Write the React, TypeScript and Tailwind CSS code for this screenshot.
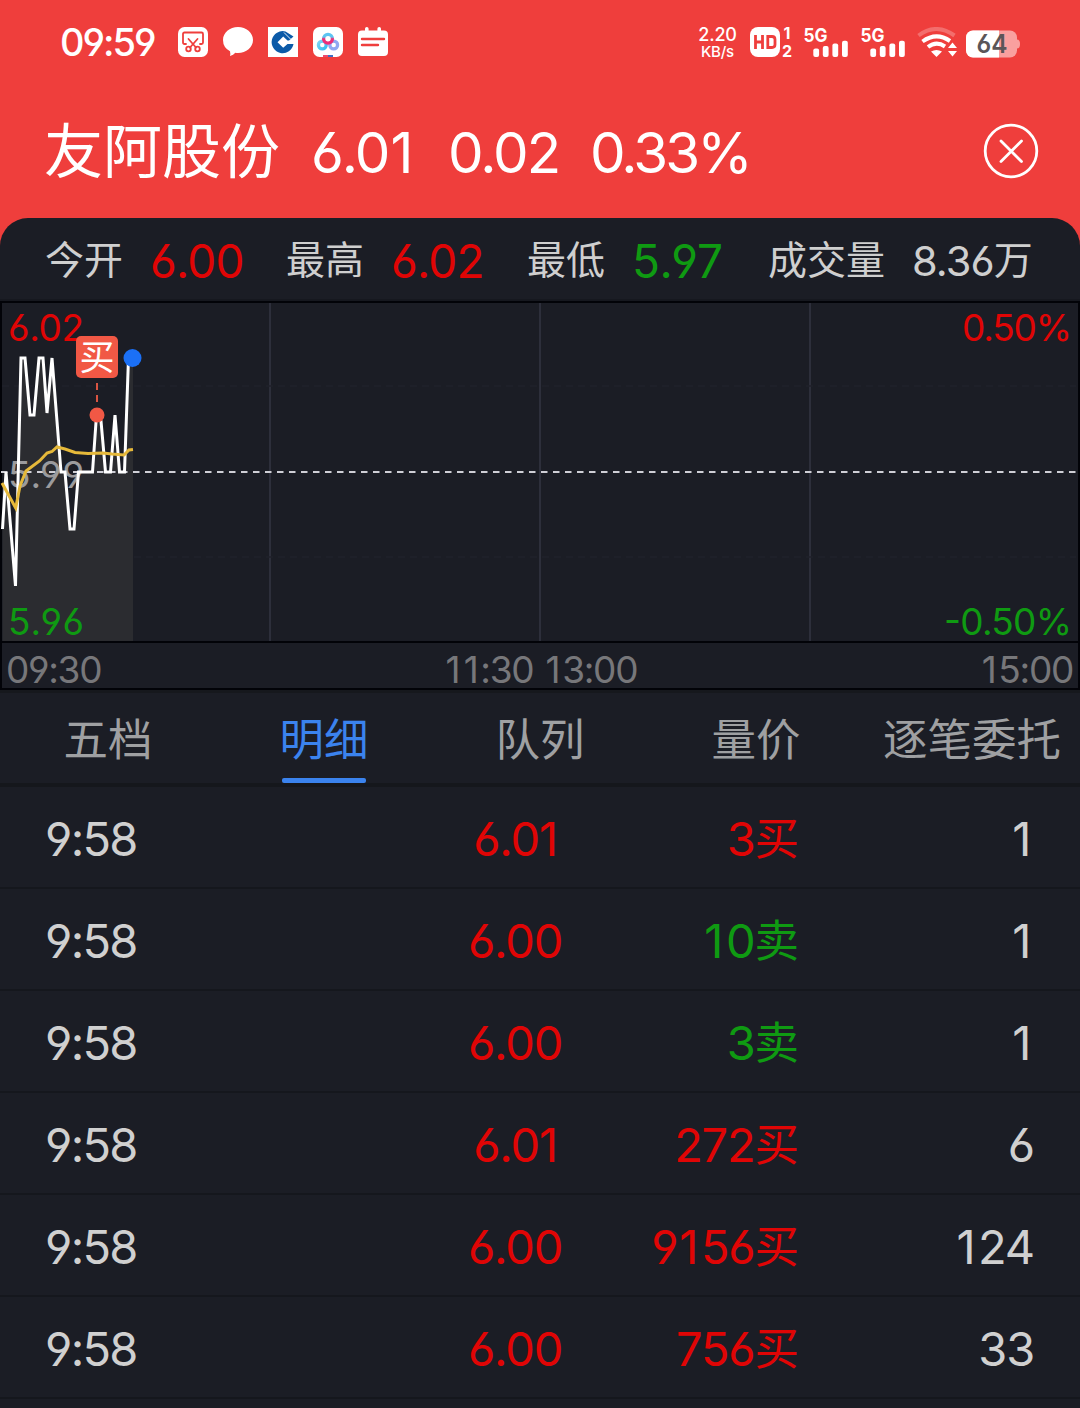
import React from "react"

type Side = "buy" | "sell"

type Tick = { time: string; price: string; volume: string; side: Side; count: string }

const ticks: Tick[] = [
  { time: "9:58", price: "6.01", volume: "3", side: "buy", count: "1" },
  { time: "9:58", price: "6.00", volume: "10", side: "sell", count: "1" },
  { time: "9:58", price: "6.00", volume: "3", side: "sell", count: "1" },
  { time: "9:58", price: "6.01", volume: "272", side: "buy", count: "6" },
  { time: "9:58", price: "6.00", volume: "9156", side: "buy", count: "124" },
  { time: "9:58", price: "6.00", volume: "756", side: "buy", count: "33" },
]

const tabs = ["五档", "明细", "队列", "量价", "逐笔委托"]

const pricePoints =
  "2.5,228 6,171 15.5,285 21,57 25,57 30,114 34,114 39,57 43,57 47,112 52,57 61,171 65,171 70,228 74,228 78.5,171 92.5,171 96.5,114 101,120 105.5,171 110.5,171 115,114 119.5,171 124.5,171 128.5,57 133,57"

const avgPoints =
  "2,182 15.7,207 20,185 26,170 39.5,160 47,152 52,150.5 57,146 65,148 75,151.5 88,152.5 103,152 112,153 124,154 129,149 133,148.5"

// the "1" is narrow in Inter, give it some air on both sides
function Num({ value }: { value: string }) {
  return (
    <span className="whitespace-nowrap">
      {value.split(/(1)/).map((part, i) =>
        part === "1" ? <span key={i} className="ml-[0.04em] mr-[0.08em]">1</span> : part
      )}
    </span>
  )
}

function SignalBars() {
  return (
    <div className="h-[30px] w-[46px]">
      <svg className="overflow-visible" width="46" height="30" viewBox="0 0 46 30" fill="#fff">
        <text x="-0.500" y="14.500" fontSize="19" fontWeight="700" textLength="24" lengthAdjust="spacingAndGlyphs">5G</text>
        <rect x="9.3" y="21.5" width="5.8" height="8.5" rx="2" />
        <rect x="18.8" y="19" width="5.8" height="11" rx="2" />
        <rect x="28.4" y="16.5" width="5.8" height="13.5" rx="2" />
        <rect x="38" y="13.7" width="5.8" height="16.3" rx="2" />
      </svg>
    </div>
  )
}

function StatusBar() {
  return (
    <div className="flex h-[84px] items-center pl-[60px] pr-[60px] text-white">
      <span className="w-[118px] text-[38px] font-medium leading-none tracking-[-2px]">09:59</span>
      <div className="flex gap-[15px]">
        <svg width="30" height="30" viewBox="0 0 30 30">
          <rect width="30" height="30" rx="6.5" fill="#fff" />
          <g fill="none" stroke="#ef3e3c" strokeWidth="1.8" strokeLinecap="round">
            <path d="M8 17H6.500Q5 17 5 15.500V7Q5 5.500 6.500 5.500H23.500Q25 5.500 25 7V15.500Q25 17 23.500 17H22" />
            <path d="M10.500 12L18 20.500M19.500 12L12 20.500" />
            <circle cx="10.500" cy="22" r="2.300" />
            <circle cx="19.500" cy="22" r="2.300" />
          </g>
        </svg>
        <svg width="30" height="30" viewBox="0 0 30 30" fill="#fff">
          <path d="M15 0C23.300 0 30 5.800 30 13S23.300 26 15 26Q13.500 26 12.300 25.800Q10.500 28 7 29Q7.600 26.500 7 24.300Q0 20.500 0 13C0 5.800 6.700 0 15 0Z" />
        </svg>
        <svg width="30" height="30" viewBox="0 0 30 30">
          <rect width="30" height="30" fill="#fff" />
          <path d="M17.500 4.500A11 11 0 1 0 25.500 17H19.500L15.200 20.800L9.500 15.200L15.200 9.500L19.500 13.500H21L25.500 9.500Z" fill="#0b5aa8" />
          <path d="M16 5.500L22.500 12" stroke="#fff" strokeWidth="0.900" />
        </svg>
        <svg width="30" height="30" viewBox="0 0 30 30">
          <defs>
            <linearGradient id="loopLeft" x1="0" y1="0" x2="1" y2="1">
              <stop offset="0" stopColor="#7fd3f5" />
              <stop offset="1" stopColor="#35bdf0" />
            </linearGradient>
            <linearGradient id="loopTop" x1="0" y1="0" x2="0" y2="1">
              <stop offset="0.300" stopColor="#5cc4f2" />
              <stop offset="0.500" stopColor="#ee2f78" />
            </linearGradient>
          </defs>
          <rect width="30" height="30" rx="6.5" fill="#fff" />
          <g fill="none" strokeWidth="3.300">
            <circle cx="9.300" cy="18" r="3.900" stroke="url(#loopLeft)" />
            <circle cx="20.700" cy="18" r="3.900" stroke="#8fa8f2" />
            <circle cx="15" cy="11.800" r="4.400" stroke="url(#loopTop)" />
          </g>
          <path d="M10 28H15V30H10Z" fill="#ee4b6a" />
          <path d="M15 28H20V30H15Z" fill="#3f6fc4" />
        </svg>
        <svg width="30" height="30" viewBox="0 0 30 30">
          <path d="M4 3.500H7V1.800A1.800 1.800 0 0 1 10.600 1.800V3.500H19.400V1.800A1.800 1.800 0 0 1 23 1.800V3.500H26Q30 3.500 30 7.500V25Q30 29 26 29H4Q0 29 0 25V7.500Q0 3.500 4 3.500Z" fill="#fff" />
          <path d="M4 12H26M4 18H20" stroke="#ef3e3c" strokeWidth="2.400" strokeLinecap="round" />
        </svg>
      </div>
      <div className="ml-auto flex items-center">
        <div className="mr-[13px] flex w-[39px] flex-col items-center font-medium">
          <span className="text-[18px] leading-[18px] tracking-[-0.2px]">2.20</span>
          <span className="text-[15px] leading-[15px] tracking-[-0.2px]">KB/s</span>
        </div>
        <svg className="mr-[10px] overflow-visible" width="44" height="30" viewBox="0 0 44 30">
          <rect width="30" height="30" rx="8" fill="#fff" />
          <path d="M5.500 8V22M12.500 8V22M5.500 15H12.500M17.800 9.500H22Q25 9.500 25 12.500V17.500Q25 20.500 22 20.500H17.800Z" fill="none" stroke="#ef3e3c" strokeWidth="2.800" />
          <text x="33.500" y="12" fontSize="16" fontWeight="700" fill="#fff">1</text>
          <text x="32" y="29.500" fontSize="16" fontWeight="700" fill="#fff">2</text>
        </svg>
        <SignalBars />
        <div className="w-[11px]" />
        <SignalBars />
        <svg className="ml-[10px]" width="40" height="30" viewBox="0 0 40 30">
          <g fill="none" stroke="#fff" strokeWidth="4">
            <path d="M1.500 8.500Q19 -4.500 37.500 8.500" opacity="0.25" />
            <path d="M5.500 14.500Q19.300 4.500 33 14" />
            <path d="M11 20Q19.300 13.500 28 19.500" />
          </g>
          <path d="M14 24.500Q19.500 21.500 25 24.500L19.500 30Z" fill="#fff" />
          <path d="M35.500 15.500L40 21H31ZM35.500 29.500L31 24H40Z" fill="#fff" />
        </svg>
        <svg className="ml-[9px] mt-[3px]" width="54" height="28" viewBox="0 0 54 28">
          <defs>
            <clipPath id="charge">
              <rect width="33" height="28" />
            </clipPath>
          </defs>
          <rect y="0.500" width="51" height="27" rx="7" fill="#f9a09f" />
          <path d="M51 9.500Q54 9.500 54 14T51 18.500Z" fill="#f9a09f" />
          <rect y="0.500" width="51" height="27" rx="7" fill="#fff" clipPath="url(#charge)" />
          <text x="10.500" y="23" fontSize="25" fontWeight="600" fill="#5b5558" textLength="31" lengthAdjust="spacingAndGlyphs">64</text>
        </svg>
      </div>
    </div>
  )
}

function QuoteHeader() {
  return (
    <div className="flex h-[134px] items-center pl-[44px] pr-[41px] text-white">
      <h1 className="w-[267px] text-[59px] leading-none">友阿股份</h1>
      <div className="flex flex-1 pt-[5px] text-[56.500px] leading-none tracking-[-2px]">
        <span className="w-[137px]"><Num value="6.01" /></span>
        <span className="w-[142px]">0.02</span>
        <span className="tracking-[-2.9px]">0.33%</span>
      </div>
      <svg width="56" height="56" viewBox="0 0 56 56" fill="none" stroke="#fff" strokeWidth="2.800" strokeLinecap="round">
        <circle cx="28" cy="28" r="25.800" />
        <path d="M18 18L38.500 38.500M38.500 18L18 38.500" />
      </svg>
    </div>
  )
}

function Stats() {
  return (
    <div className="flex h-[81px] items-center pl-[45px] pt-[4px] leading-none text-[#cfcfcf]">
      <span className="w-[105px] pb-[2px] text-[39px]">今开</span>
      <span className="w-[136px] text-[46px] tracking-[-0.8px] text-[#e00505]">6.00</span>
      <span className="w-[105px] pb-[2px] text-[39px]">最高</span>
      <span className="w-[136px] text-[46px] tracking-[-0.8px] text-[#e00505]">6.02</span>
      <span className="w-[105px] pb-[2px] text-[39px]">最低</span>
      <span className="w-[136px] text-[46px] tracking-[0.8px] text-[#0f9a12]">5.97</span>
      <span className="w-[144px] pb-[2px] text-[39px]">成交量</span>
      <span className="flex items-center pt-[2px]">
        <span className="text-[41.500px] tracking-[-0.9px]">8.36</span>
        <span className="pb-[4px] text-[39px]">万</span>
      </span>
    </div>
  )
}

function PriceChart() {
  return (
    <div className="h-[342px] border-2 border-[#020308]">
      <svg className="-ml-[2px] block overflow-visible" width="1080" height="338" viewBox="0 2 1080 338" fontSize="37">
        <path d="M270 2V340M540 2V340M810 2V340" stroke="#2d2f3b" strokeWidth="2" />
        <path d="M2 85H1076M2 256H1076" stroke="#20222b" strokeWidth="1.500" strokeDasharray="7 5" />
        <polygon points={`2.5,340 ${pricePoints} 133,340`} fill="#2b2c30" />
        <path d="M1 171H1076" stroke="#cfcfd6" strokeWidth="2" strokeDasharray="6.500 5.500" />
        <text x="8" y="40" fill="#e00505" textLength="76">6.02</text>
        <text x="8" y="187" fill="#9b9b9d" textLength="76">5.99</text>
        <text x="8" y="334" fill="#0f9a12" textLength="76">5.96</text>
        <text x="962" y="40" fill="#e00505" textLength="110">0.50%</text>
        <text x="944" y="334" fill="#0f9a12" textLength="128">-0.50%</text>
        <polyline points={pricePoints} fill="none" stroke="#fff" strokeWidth="3" />
        <polyline points={avgPoints} fill="none" stroke="#e6b93a" strokeWidth="3" />
        <path d="M97 82V103" stroke="#d95442" strokeWidth="2" strokeDasharray="7 5" />
        <circle cx="97" cy="114" r="7.500" fill="#f15845" />
        <circle cx="132.500" cy="57" r="9" fill="#1b70f6" />
        <rect x="76" y="35" width="42" height="42" rx="5" fill="#f15845" />
        <text x="79.500" y="69" fontSize="35" fill="#fff">买</text>
      </svg>
    </div>
  )
}

function TimeAxis() {
  return (
    <div className="flex h-[47px] border-x-2 border-b-2 border-[#020308] pl-[4px] pr-[5px] pt-[8px] text-[37px] leading-[37px] tracking-[-1.3px] text-[#77777a]">
      <span className="w-[438px]">09:30</span>
      <span className="w-[100px]"><Num value="11:30" /></span>
      <span><Num value="13:00" /></span>
      <span className="ml-auto"><Num value="15:00" /></span>
    </div>
  )
}

function TabBar() {
  return (
    <div className="grid h-[94px] grid-cols-5 border-b-4 border-[#15171c] text-[44.500px] leading-[95px] text-[#9fa0a2]">
      {tabs.map((tab) => (
        <div key={tab} className="flex h-[90px] justify-center whitespace-nowrap">
          {tab === "明细" ? (
            <span className="flex h-[90px] flex-col items-center text-[#3b83ee]">
              <span className="h-[85px]">{tab}</span>
              <span className="h-[5px] w-[84px] rounded-[2px] bg-[#3b83ee]" />
            </span>
          ) : (
            <span>{tab}</span>
          )}
        </div>
      ))}
    </div>
  )
}

function TickRow({ tick }: { tick: Tick }) {
  return (
    <div className="flex h-[102px] items-center border-b-2 border-[#15171d] pl-[45px] pr-[46px] pt-[3px] text-[47px] leading-none tracking-[-1.200px] text-[#d0d0d0]">
      <span className="w-[370px] tracking-[-1.7px]">{tick.time}</span>
      <span className="w-[200px] text-center text-[#e00505]">{tick.price}</span>
      <span className={`flex w-[184px] items-center justify-end ${tick.side === "buy" ? "text-[#e00505]" : "text-[#0f9a12]"}`}>
        <Num value={tick.volume} />
        <span className="pt-[2px] text-[44.500px] tracking-normal">{tick.side === "buy" ? "买" : "卖"}</span>
      </span>
      <span className="ml-auto"><Num value={tick.count} /></span>
    </div>
  )
}

export default function App() {
  return (
    <div className="h-[1408px] w-[1080px] overflow-hidden bg-[#ef3e3c] font-['Inter','Noto_Sans_CJK_SC',sans-serif] [font-feature-settings:'cv03','cv04']">
      <StatusBar />
      <QuoteHeader />
      <div className="h-[1190px] rounded-t-[28px] bg-[#1b1d25]">
        <Stats />
        <div className="h-[2px] bg-[#16181f]" />
        <PriceChart />
        <TimeAxis />
        <div className="h-[3px] bg-[#16181d]" />
        <TabBar />
        {ticks.map((tick, i) => (
          <TickRow key={i} tick={tick} />
        ))}
      </div>
    </div>
  )
}
